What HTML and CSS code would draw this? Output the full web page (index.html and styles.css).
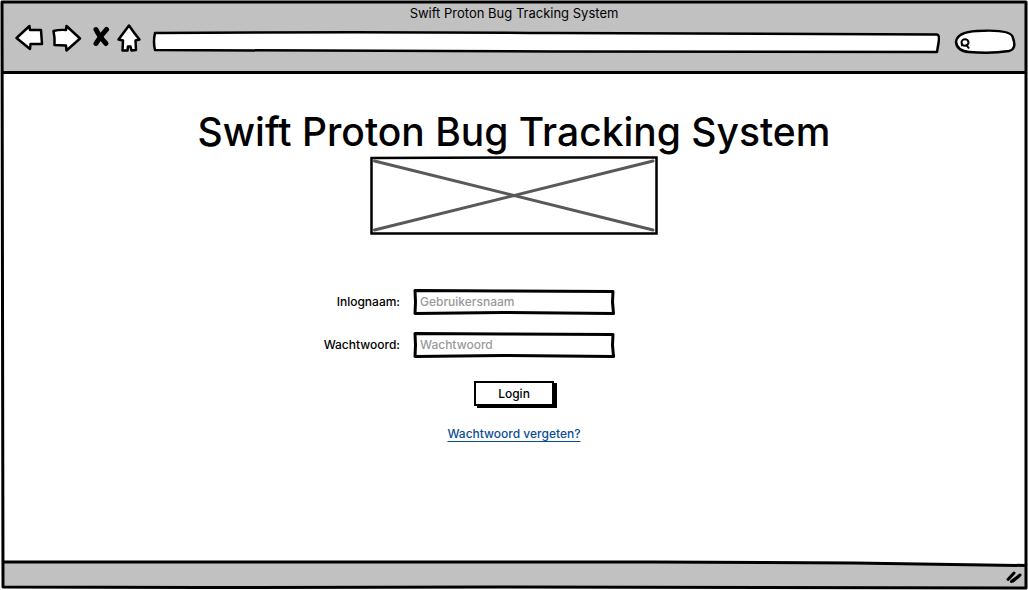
FILE: index.html
```html
<!DOCTYPE html>
<html lang="nl">
<head>
<meta charset="utf-8">
<meta name="viewport" content="width=device-width, initial-scale=1">
<title>Swift Proton Bug Tracking System</title>
<link rel="stylesheet" href="styles.css">
</head>
<body>
<div class="window">
  <header class="chrome">
    <div class="window-title">Swift Proton Bug Tracking System</div>
    <div class="toolbar">
      <nav class="nav" aria-label="Browser">
        <button class="icon-button" type="button" aria-label="Back">
          <svg class="ink" width="28" height="28" viewBox="0 0 28 28"><path d="M1.500 14 L14.500 2 L15 6 L26 6 L27 20 L15.500 20 L15 25 Z"/></svg>
        </button>
        <button class="icon-button forward" type="button" aria-label="Forward">
          <svg class="ink" width="28" height="28" viewBox="0 0 28 28"><path d="M1.500 7 Q7 5.500 14 6 L14.500 2 L28 14.500 L14.500 26.500 L14 21.500 L2.500 21 Q3 14 1.500 7 Z"/></svg>
        </button>
        <button class="icon-button stop" type="button" aria-label="Stop">
          <svg class="cross" width="18" height="28" viewBox="0 0 18 28"><path d="M4 5.500 Q7 12 14 19.500"/><path d="M14.500 5.500 Q9 11 4 19.500"/></svg>
        </button>
        <button class="icon-button" type="button" aria-label="Home">
          <svg class="ink" width="24" height="28" viewBox="0 0 24 28"><path d="M12 1.500 Q17 9 22.500 15.500 L18.500 16.500 L19 26 L14.500 26.500 L13.500 22.500 L11 22.500 L10.500 26.500 L5.500 26.500 L6 16.500 L1.500 15.500 Z"/></svg>
        </button>
      </nav>
      <div class="address">
        <svg class="sketch" viewBox="0 0 788 24" preserveAspectRatio="none" aria-hidden="true"><path fill="#fff" d="M3 3 Q200 1.500 400 3 T785 4.500 Q788 5 786.500 13 L785 22 L400 21.500 L3 20 Q1 12 3 3 Z"/></svg>
        <input class="bare" type="text" aria-label="Address">
      </div>
      <div class="search">
        <svg class="sketch" viewBox="0 0 62 26" preserveAspectRatio="none" aria-hidden="true"><path fill="#fff" d="M2 13 Q3 3 23 2 Q58 0 59 9 Q63 20 55 22 Q37 25 15 23 Q3 22 2 13 Z"/></svg>
        <svg class="lens" width="14" height="14" viewBox="0 0 14 14" aria-hidden="true"><ellipse cx="7" cy="5.500" rx="3.500" ry="3.200"/><path d="M3 8.500 L5 8 M8 7.500 L11 11.500"/></svg>
        <input class="bare" type="search" aria-label="Search">
      </div>
    </div>
  </header>

  <main class="page">
    <h1 class="heading">Swift Proton Bug Tracking System</h1>
    <svg class="placeholder" viewBox="0 0 288 79" role="img" aria-label="Logo">
      <path class="diagonal" d="M4.500 5 L283 74 M4.500 74 L283 5"/>
      <path class="edge" d="M1.500 2 L150 1.500 L286.500 1.500 L286.500 77.500 L1.500 77.500 Z"/>
    </svg>
    <form class="login">
      <label class="label" for="user">Inlognaam:</label>
      <div class="field">
        <svg class="sketch" viewBox="0 0 202 26" preserveAspectRatio="none" aria-hidden="true"><path d="M2 1.500 L90 2 L200 2.500 L199.500 13 L200.500 24.500 L90 23.500 L2 24.500 L2.500 13 Z"/></svg>
        <input class="bare" id="user" type="text" placeholder="Gebruikersnaam">
      </div>
      <label class="label" for="pass">Wachtwoord:</label>
      <div class="field">
        <svg class="sketch" viewBox="0 0 202 26" preserveAspectRatio="none" aria-hidden="true"><path d="M2 1.500 L90 2 L200 2.500 L199.500 13 L200.500 24.500 L90 23.500 L2 24.500 L2.500 13 Z"/></svg>
        <input class="bare" id="pass" type="password" placeholder="Wachtwoord">
      </div>
      <div class="actions">
        <button class="submit" type="submit">Login</button>
        <a class="forgot" href="#">Wachtwoord vergeten?</a>
      </div>
    </form>
  </main>

  <footer class="status">
    <svg class="sketch" viewBox="0 0 1022 28" preserveAspectRatio="none" aria-hidden="true"><path class="fill" d="M0 2 L650 2 L850 3 L1022 5.500 V28 H0 Z"/><path d="M0 2 L650 2 L850 3 L1022 5.500"/></svg>
    <svg class="grip" width="18" height="16" viewBox="0 0 18 16" aria-hidden="true"><path d="M3 10.500 L9 4 M6.500 12.500 L15 6 M8 12 L14 7"/></svg>
  </footer>
  <svg class="sketch frame" viewBox="0 0 1028 590" preserveAspectRatio="none" aria-hidden="true"><path d="M2 2 L1026 2 L1026 588 L500 587 L200 587.500 L3 587 L2.500 300 Z"/></svg>
</div>
</body>
</html>
```

FILE: styles.css
```css
* {
  box-sizing: border-box;
}

body {
  margin: 0;
  background: #fff;
  color: #000;
  font: 500 12px/16px Inter, "Open Sans", sans-serif;
}

.window {
  position: relative;
  display: flex;
  flex-direction: column;
  min-height: 100vh;
  padding: 2px;
}

.sketch {
  position: absolute;
  inset: 0;
  width: 100%;
  height: 100%;
  fill: none;
  stroke: #000;
  stroke-width: 3;
  stroke-linejoin: round;
  pointer-events: none;
}

.sketch path {
  vector-effect: non-scaling-stroke;
}

.toolbar .sketch {
  stroke-width: 2.5;
}

.chrome {
  display: flex;
  flex-direction: column;
  height: 72px;
  padding: 3px 0 0;
  background: #c1c1c1;
  border-bottom: 3px solid #000;
}

.window-title {
  font-size: 13px;
  font-weight: 400;
  text-align: center;
}

.toolbar {
  display: flex;
  align-items: center;
  padding: 0 10px 0 13px;
}

.nav {
  display: flex;
  align-items: center;
  margin-right: 11px;
}

.icon-button {
  display: flex;
  padding: 0;
  border: 0;
  background: none;
}

.forward {
  margin-left: 9px;
}

.stop {
  margin: 0 7px 0 12px;
}

.ink {
  overflow: visible;
  fill: #fff;
  stroke: #000;
  stroke-width: 2.5;
  stroke-linejoin: round;
}

.cross {
  fill: none;
  stroke: #000;
  stroke-width: 5;
  stroke-linecap: round;
}

.address {
  position: relative;
  flex: 1;
  height: 24px;
  margin: 8px 14px 0 0;
}

.search {
  position: relative;
  width: 62px;
  height: 26px;
  margin-top: 8px;
}

.lens {
  position: absolute;
  left: 4px;
  top: 8px;
  fill: none;
  stroke: #000;
  stroke-width: 2;
}

.bare {
  position: relative;
  width: 100%;
  height: 100%;
  padding: 0 7px 2px;
  border: 0;
  outline: 0;
  background: none;
  color: #000;
  font: inherit;
}

.bare::placeholder {
  color: #999;
  opacity: 1;
}

.search .bare {
  padding-left: 18px;
}

.page {
  display: flex;
  flex: 1;
  flex-direction: column;
  align-items: center;
  padding: 34px 20px 20px;
}

.heading {
  margin: 0;
  font-size: 39px;
  font-weight: 500;
  line-height: 48px;
  text-align: center;
}

.placeholder {
  width: 288px;
  max-width: 100%;
}

.placeholder path {
  fill: none;
  stroke-width: 2.5;
}

.placeholder .edge {
  stroke: #000;
}

.placeholder .diagonal {
  stroke: #595959;
  stroke-width: 3;
  stroke-linecap: round;
}

.login {
  display: grid;
  grid-template-columns: 1fr 202px 1fr;
  align-items: center;
  gap: 17px 13px;
  width: 100%;
  margin-top: 54px;
}

.label {
  grid-column: 1;
  text-align: right;
}

.field {
  position: relative;
  grid-column: 2;
  height: 26px;
}

.actions {
  display: flex;
  grid-column: 2;
  flex-direction: column;
  align-items: center;
  gap: 20px;
  padding-top: 6px;
}

.submit {
  width: 80px;
  height: 25px;
  padding: 0;
  border: 2px solid #000;
  background: #fff;
  box-shadow: 3px 2px 0 #000;
  color: #000;
  font: inherit;
}

.forgot {
  color: #0b4d94;
  text-underline-offset: 3px;
}

.status {
  position: relative;
  display: flex;
  align-items: center;
  justify-content: flex-end;
  height: 28px;
  padding: 6px 3px 0;
}

.status .fill {
  fill: #c1c1c1;
  stroke: none;
}

.grip {
  position: relative;
  fill: none;
  stroke: #000;
  stroke-width: 3;
  stroke-linecap: round;
}
```
